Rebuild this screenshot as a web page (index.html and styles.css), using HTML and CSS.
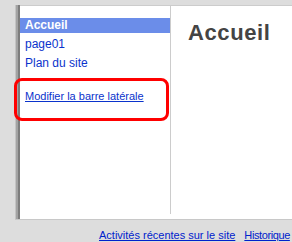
FILE: index.html
```html
<!DOCTYPE html>
<html lang="fr">
<head>
    <meta charset="UTF-8">
    <meta name="viewport" content="width=device-width, initial-scale=1.0">
    <title>Accueil</title>
    <link rel="stylesheet" href="styles.css">
</head>
<body>
    <div class="sheet">
        <div class="columns">
            <div class="sidebar">
                <ul class="nav">
                    <li class="current">Accueil</li>
                    <li><a href="#">page01</a></li>
                    <li><a href="#">Plan du site</a></li>
                </ul>
                <div class="edit-box">
                    <a href="#">Modifier la barre latérale</a>
                </div>
            </div>
            <div class="main">
                <h2>Accueil</h2>
            </div>
        </div>
    </div>
    <div class="footer">
        <a href="#">Activités récentes sur le site</a>
        <a href="#" class="history">Historique</a>
    </div>
</body>
</html>
```

FILE: styles.css
```css
* {
    box-sizing: border-box;
    margin: 0;
    padding: 0;
}

body {
    font-family: "Liberation Sans", Arial, sans-serif;
    background-color: #dddddd;
    overflow: hidden;
}

.sheet {
    margin-left: 15px;
    height: 214px;
    padding-left: 5px;
    background: linear-gradient(to right, #c4c4c4 0 1px, #a3a3a3 1px 3px, #7d7d7d 3px 5px, #ffffff 5px);
}

.columns {
    display: flex;
    margin-top: 5px;
    height: 209px;
    border-top: 1px solid #cccccc;
}

.sidebar {
    width: 151px;
    padding-top: 12px;
    border-right: 1px solid #cccccc;
}

.nav {
    list-style: none;
    font-size: 12px;
}

.nav li {
    line-height: 15px;
    padding-left: 5px;
    margin-bottom: 4px;
}

.nav li.current {
    background-color: #6b8de9;
    color: white;
    font-weight: bold;
}

.nav a {
    color: #0a33cc;
    text-decoration: none;
}

.edit-box {
    margin-top: 7px;
    margin-left: -6px;
    width: 155px;
    padding: 9px 0 15px 8px;
    border: 3px solid #ff0000;
    border-radius: 8px;
    font-size: 11px;
    line-height: 13px;
}

.edit-box a {
    color: #0a33cc;
}

.main {
    flex: 1;
    padding: 14px 0 0 17px;
}

.main h2 {
    font-size: 22px;
    line-height: 26px;
    letter-spacing: 0.6px;
    color: #444444;
}

.footer {
    display: flex;
    gap: 9px;
    margin-left: 15px;
    border-top: 1px solid #c8c8c8;
    padding: 9px 0 0 84px;
    font-size: 11px;
    line-height: 13px;
    white-space: nowrap;
}

.footer a {
    color: #0022cc;
}

.footer .history {
    letter-spacing: -0.4px;
}
```
